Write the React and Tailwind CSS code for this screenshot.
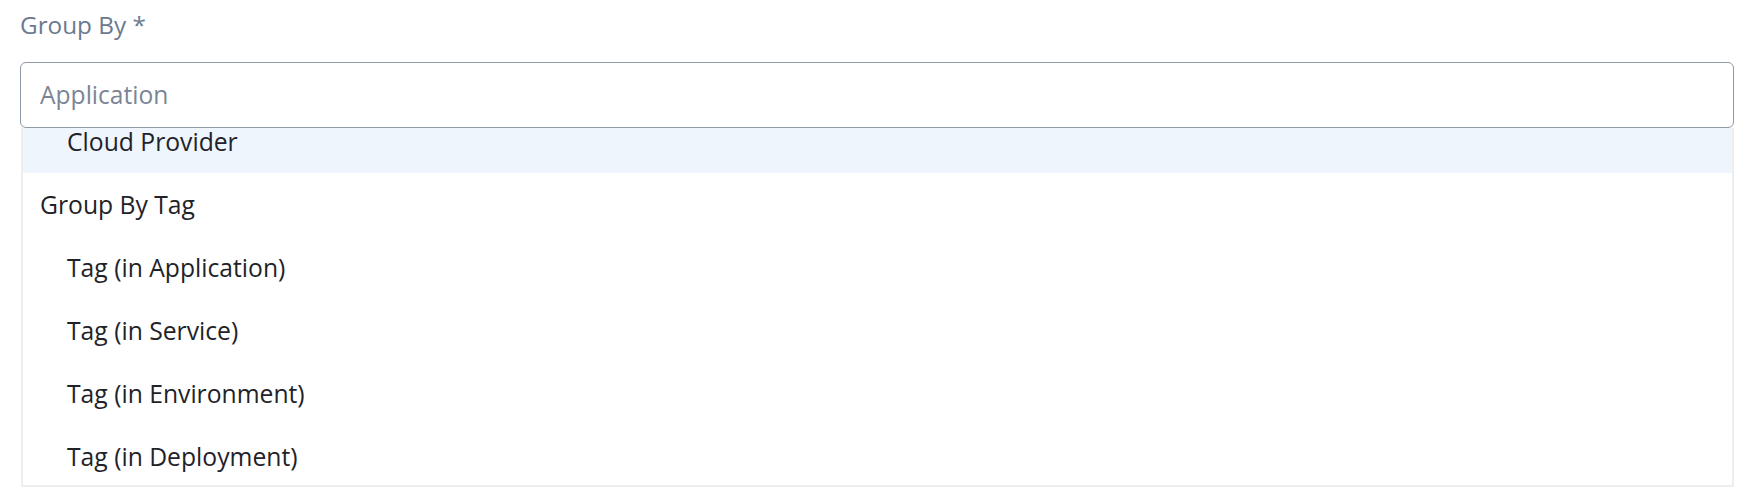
import React from "react";

export default function App() {
  const items = [
    { label: "Group By Tag", header: true },
    { label: "Tag (in Application)", indent: true },
    { label: "Tag (in Service)", indent: true },
    { label: "Tag (in Environment)", indent: true },
    { label: "Tag (in Deployment)", indent: true },
  ];
  return (
    <div className="w-[1756px] h-[490px] bg-white pl-[20px] pr-[22px] pt-[8px] overflow-hidden font-['Open_Sans',sans-serif]">
      <div className="text-[24.3px] leading-[34px] text-[#6b7a8f]">Group By *</div>
      <div className="mt-[20px] h-[66px] border-[1.5px] border-[#8f99a8] rounded-[6px] flex items-center px-[19px]">
        <span className="text-[24.6px] text-[#7b8595]">Application</span>
      </div>
      <div className="ml-[1px] h-[359px] border-2 border-t-0 border-[#eeeeee] overflow-hidden">
        <div className="h-[45px] bg-[#eef5fd] pl-[44px] text-[24.7px] leading-[28px] text-[#1f2329]">
          Cloud Provider
        </div>
        {items.map((it) => (
          <div
            key={it.label}
            className={
              "h-[63px] flex items-center text-[24.7px] text-[#1f2329] " +
              (it.indent ? "pl-[44px]" : "pl-[17px]")
            }
          >
            {it.label}
          </div>
        ))}
      </div>
    </div>
  );
}
